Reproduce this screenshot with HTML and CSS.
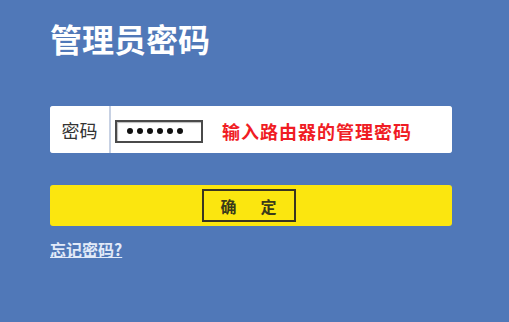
FILE: index.html
```html
<!DOCTYPE html>
<html lang="zh-CN">
<head>
<meta charset="utf-8">
<title>管理员密码</title>
<link rel="stylesheet" href="styles.css">
</head>
<body>
<div class="page">
  <h1 class="title">管理员密码</h1>
  <div class="pwd-row">
    <div class="label">密码</div>
    <div class="field">
      <div class="input"><span class="dot"></span><span class="dot"></span><span class="dot"></span><span class="dot"></span><span class="dot"></span><span class="dot"></span></div>
      <span class="hint">输入路由器的管理密码</span>
    </div>
  </div>
  <div class="confirm-bar">
    <div class="confirm-btn"><span>确</span><span>定</span></div>
  </div>
  <a class="forgot" href="#">忘记密码?</a>
</div>
</body>
</html>
```
FILE: styles.css
```css
html, body {
  margin: 0;
  padding: 0;
  background: #5078b8;
  width: 509px;
  height: 322px;
  overflow: hidden;
  font-family: "Noto Sans CJK SC", "Noto Sans", sans-serif;
}
.page {
  padding: 18px 57px 0 50px;
  display: flex;
  flex-direction: column;
  align-items: stretch;
}
.title {
  margin: 0;
  font-size: 32px;
  line-height: 40px;
  font-weight: 700;
  color: #ffffff;
}
.pwd-row {
  margin-top: 48px;
  height: 47px;
  display: flex;
  background: #c7d1e3;
  border-radius: 3px;
  gap: 2px;
}
.label {
  width: 59px;
  background: #ffffff;
  border-radius: 3px 0 0 3px;
  display: flex;
  align-items: center;
  justify-content: center;
  font-size: 18px;
  color: #333333;
}
.field {
  flex: 1;
  background: #ffffff;
  border-radius: 0 3px 3px 0;
  display: flex;
  align-items: center;
  padding-left: 4px;
}
.input {
  box-sizing: border-box;
  width: 88px;
  height: 23px;
  border: 2px solid #4a4a4a;
  box-shadow: inset 1px 1px 1px #bbbbbb;
  display: flex;
  align-items: center;
  gap: 4px;
  padding-left: 10px;
  margin-top: 3px;
}
.dot {
  width: 6px;
  height: 6px;
  border-radius: 50%;
  background: #111111;
}
.hint {
  margin-left: 19px;
  font-size: 18px;
  font-weight: 700;
  letter-spacing: 1px;
  color: #f01c24;
  margin-top: 3px;
}
.confirm-bar {
  margin-top: 32px;
  height: 41px;
  background: #fbe60f;
  border-radius: 3px;
  display: flex;
  align-items: center;
  justify-content: center;
}
.confirm-btn {
  width: 90px;
  height: 29px;
  border: 2px solid #3a3520;
  display: flex;
  align-items: center;
  justify-content: center;
  gap: 24px;
  font-size: 16px;
  font-weight: 700;
  color: #3a3a1a;
  margin-right: 5px;
}
.forgot {
  margin-top: 12px;
  align-self: flex-start;
  font-size: 16px;
  font-weight: 700;
  line-height: 22px;
  color: #e2eaf8;
  text-decoration: underline;
}
```
